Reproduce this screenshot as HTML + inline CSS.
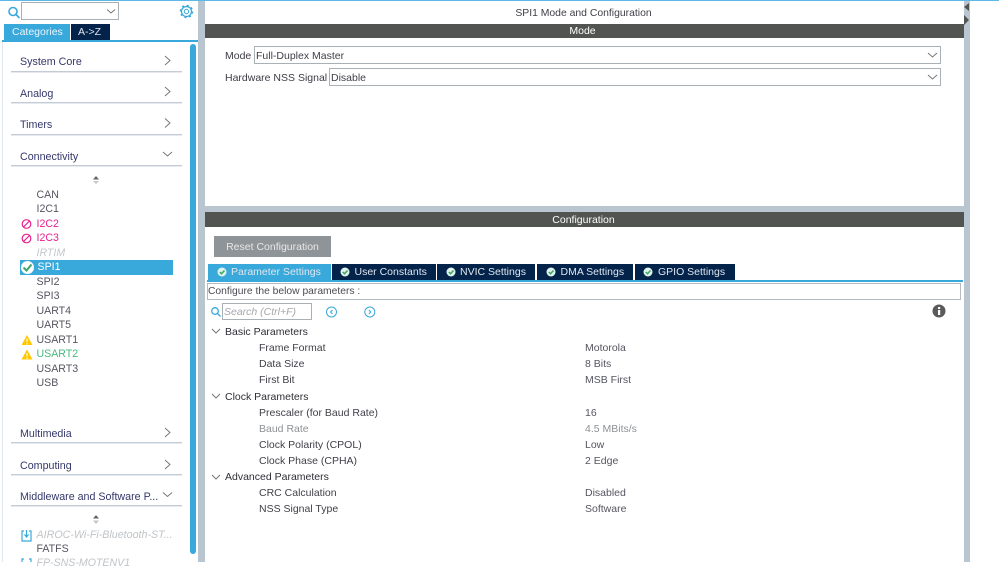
<!DOCTYPE html>
<html><head><meta charset="utf-8"><style>
html,body{margin:0;padding:0;background:#fff}
body{width:999px;height:562px;overflow:hidden;position:relative;font-family:"Liberation Sans",sans-serif;font-size:11px;color:#3c3c46}
.a{position:absolute;white-space:nowrap}
.cat{position:absolute;left:20px;font-size:10.7px;color:#35386a;line-height:14px;margin-top:1px;white-space:nowrap}
.ln{position:absolute;left:11px;width:171px;height:1px;background:#c3ccd4;box-shadow:0 1px 0 #e6eaee}
.it{position:absolute;left:36.5px;font-size:10.6px;line-height:14px;color:#555560;white-space:nowrap}
.t{position:absolute;top:264px;height:16px;background:#03234b;color:#dfe6ee;font-size:10.5px;line-height:16px;box-sizing:border-box}
.t svg{position:absolute;top:3px}
.t span{position:absolute;top:0;white-space:nowrap}
.hd{position:absolute;left:205px;width:759px;height:14px;background:#525452;color:#fff;text-align:center;font-size:10.5px;line-height:14px}
.p{position:absolute;font-size:10.5px;line-height:14px;color:#3f3f48;white-space:nowrap;margin-top:1px}
.v{position:absolute;left:585px;font-size:10.5px;line-height:14px;color:#555560;white-space:nowrap;margin-top:1px}
.sel{position:absolute;box-sizing:border-box;height:18px;background:#fff;border:1px solid #a9b0b6;font-size:10.5px;line-height:18px;padding-left:1px;color:#3f3f48}
</style></head><body>
<div class="a" style="left:0;top:0;width:999px;height:1px;background:#5cb8e6"></div>
<div class="a" style="left:198px;top:1px;width:7px;height:561px;background:#b9c6cf"></div>
<div class="a" style="left:964px;top:1px;width:6px;height:561px;background:#b9c6cf"></div>
<div class="a" style="left:2px;top:42px;width:1px;height:520px;background:#e3e8ec"></div>
<svg class="a" style="left:964px;top:1px" width="6" height="26"><path d="M5 2V10L0 6Z" fill="#525452"/><path d="M0 14V24L5 19Z" fill="#525452"/></svg>

<svg class="a" style="left:6px;top:5px" width="16" height="16" fill="none" stroke="#39a9dc" stroke-width="1.6"><circle cx="7" cy="6.5" r="4"/><path d="M10 9.5L13.5 13"/></svg>
<div class="a" style="left:21px;top:2px;width:98px;height:18px;box-sizing:border-box;border:1px solid #a9b0b6;background:#fff"></div>
<svg class="a" style="left:106px;top:8px" width="10" height="7" fill="none" stroke="#777" stroke-width="1"><path d="M1 1.5L5 5L9 1.5"/></svg>
<svg class="a" style="left:179px;top:4px" width="15" height="15" viewBox="0 0 15 15" fill="none" stroke="#39a9dc"><circle cx="7.5" cy="7.5" r="2.2"/><circle cx="7.5" cy="7.5" r="5" stroke-width="1.2"/><circle cx="7.5" cy="7.5" r="6" stroke-width="1.6" stroke-dasharray="2 2.71"/></svg>

<div class="a" style="left:4px;top:24px;width:66px;height:16px;background:#39a9dc;color:#e8f5fb;font-size:10.5px;line-height:16px;text-indent:8px">Categories</div>
<div class="a" style="left:71px;top:24px;width:39px;height:16px;background:#03234b;color:#dfe6ee;font-size:10.5px;line-height:16px;text-indent:7px">A-&gt;Z</div>
<div class="a" style="left:2px;top:40px;width:196px;height:2px;background:#39a9dc"></div>
<div class="a" style="left:190px;top:44px;width:6px;height:510px;background:#39a9dc;border-radius:3px"></div>

<div class="cat" style="top:54px">System Core</div><div class="ln" style="top:71px"></div>
<div class="cat" style="top:86px">Analog</div><div class="ln" style="top:102px"></div>
<div class="cat" style="top:117px">Timers</div><div class="ln" style="top:134px"></div>
<div class="cat" style="top:149px">Connectivity</div><div class="ln" style="top:165px"></div>
<div class="cat" style="top:426px">Multimedia</div><div class="ln" style="top:442px"></div>
<div class="cat" style="top:458px">Computing</div><div class="ln" style="top:474px"></div>
<div class="cat" style="top:489px">Middleware and Software P...</div><div class="ln" style="top:505px"></div>

<svg class="a" style="left:160px;top:50px" width="16" height="130" fill="none" stroke="#777" stroke-width="1">
<path d="M5 6L10 10.500L5 15"/><path d="M5 37L10 41.500L5 46"/><path d="M5 68.500L10 73L5 77.500"/><path d="M3 102L7.500 106L12 102"/></svg>
<svg class="a" style="left:160px;top:420px" width="16" height="90" fill="none" stroke="#777" stroke-width="1">
<path d="M5 8L10 12.500L5 17"/><path d="M5 40L10 44.500L5 49"/><path d="M3 72.500L7.500 76.500L12 72.500"/></svg>

<svg class="a" style="left:92px;top:176px" width="8" height="9"><path d="M4 0L7 3.500H1Z" fill="#666"/><path d="M4 8L7 5H1Z" fill="#c6c6c6"/></svg>
<svg class="a" style="left:92px;top:515px" width="8" height="10"><path d="M4 0L7 3.500H1Z" fill="#666"/><path d="M4 9L7 5.500H1Z" fill="#c6c6c6"/></svg>

<div class="it" style="top:188px">CAN</div>
<div class="it" style="top:202px">I2C1</div>
<div class="it" style="top:217px;color:#e6208f">I2C2</div>
<div class="it" style="top:231px;color:#e6208f">I2C3</div>
<div class="it" style="top:246px;color:#c4c8cc;font-style:italic">IRTIM</div>
<div class="a" style="left:20px;top:260px;width:153px;height:15px;background:#39a9dc"></div>
<div class="it" style="left:37.500px;top:260px;color:#fff">SPI1</div>
<div class="it" style="top:275px">SPI2</div>
<div class="it" style="top:289px">SPI3</div>
<div class="it" style="top:304px">UART4</div>
<div class="it" style="top:318px">UART5</div>
<div class="it" style="top:333px">USART1</div>
<div class="it" style="top:347px;color:#46b97c">USART2</div>
<div class="it" style="top:362px">USART3</div>
<div class="it" style="top:376px">USB</div>
<div class="it" style="top:528px;color:#c0c4c8;font-style:italic;font-size:10.7px">AIROC-Wi-Fi-Bluetooth-ST...</div>
<div class="it" style="top:542px">FATFS</div>
<div class="it" style="top:556px;color:#c0c4c8;font-style:italic">FP-SNS-MOTENV1</div>

<svg class="a" style="left:21px;top:218px" width="12" height="26" fill="none" stroke="#e6208f" stroke-width="1.200"><circle cx="5.500" cy="6" r="4.300"/><path d="M2.500 9L8.500 3"/><circle cx="5.500" cy="20.500" r="4.300"/><path d="M2.500 23.500L8.500 17.500"/></svg>
<svg class="a" style="left:20px;top:260px" width="15" height="15"><circle cx="7.500" cy="7.500" r="6.500" fill="#fff"/><path d="M3.500 7.500L6.500 10.500L11.500 4.500" fill="none" stroke="#3fa46a" stroke-width="2"/></svg>
<svg class="a" style="left:21px;top:335px" width="13" height="26"><path d="M6 0L11.500 10H.5Z" fill="#ffc800"/><path d="M6 3.500V7M6 8V9.500" stroke="#fff" stroke-width="1"/><path d="M6 14.500L11.500 24.500H.5Z" fill="#ffc800"/><path d="M6 18V21.500M6 22.500V24" stroke="#fff" stroke-width="1"/></svg>
<svg class="a" style="left:21px;top:529px" width="12" height="33" fill="none" stroke="#39a9dc" stroke-width="1.200"><path d="M3 2H1V12H10V2H8"/><path d="M5.500 1V7"/><path d="M3.500 5.500L5.500 8L7.500 5.500"/><path d="M3 30H1V36H10V30H8"/></svg>

<div class="a" style="left:205px;top:7px;width:759px;text-align:center;font-size:10.4px;line-height:14px;color:#3f3f48;text-indent:-2px">SPI1 Mode and Configuration</div>
<div class="hd" style="top:24px;text-indent:-4px">Mode</div>
<div class="a" style="left:225px;top:49px;font-size:10.500px;line-height:14px">Mode</div>
<div class="sel" style="left:254px;top:46px;width:687px">Full-Duplex Master</div>
<div class="a" style="left:225px;top:71px;font-size:10.500px;line-height:14px">Hardware NSS Signal</div>
<div class="sel" style="left:329px;top:68px;width:612px">Disable</div>
<svg class="a" style="left:927px;top:51px" width="11" height="30" fill="none" stroke="#777"><path d="M1 2L5.500 6L10 2"/><path d="M1 24L5.500 28L10 24"/></svg>

<div class="a" style="left:205px;top:206px;width:759px;height:6px;background:#b9c6cf"></div>
<div class="hd" style="top:212px;height:15px;line-height:16px;text-indent:-2px">Configuration</div>

<div class="a" style="left:214px;top:236px;width:117px;height:21px;background:#8f9498;color:#e8e8e8;font-size:10.500px;line-height:23px;text-align:center">Reset Configuration</div>

<div class="t" style="left:208px;width:123px;background:#39a9dc"><svg style="left:9px" width="10" height="10"><use href="#ck"/></svg><span style="left:23px">Parameter Settings</span></div>
<div class="t" style="left:332px;width:104px"><svg style="left:8px" width="10" height="10"><use href="#ck"/></svg><span style="left:22.500px">User Constants</span></div>
<div class="t" style="left:437px;width:98px"><svg style="left:9px" width="10" height="10"><use href="#ck"/></svg><span style="left:23px">NVIC Settings</span></div>
<div class="t" style="left:537px;width:96px"><svg style="left:9px" width="10" height="10"><use href="#ck"/></svg><span style="left:23.500px">DMA Settings</span></div>
<div class="t" style="left:635px;width:100px"><svg style="left:8px" width="10" height="10"><use href="#ck"/></svg><span style="left:23px">GPIO Settings</span></div>
<svg width="0" height="0" style="position:absolute"><defs><g id="ck"><circle cx="5" cy="5" r="4.500" fill="#dff3ea"/><path d="M2.800 5L4.500 6.800L7.500 3.500" fill="none" stroke="#3fa46a" stroke-width="1.500"/></g></defs></svg>
<div class="a" style="left:207px;top:280px;width:756px;height:2px;background:#39a9dc"></div>
<div class="a" style="left:207px;top:283px;width:754px;height:17px;box-sizing:border-box;border:1px solid #b4bbc0;font-size:10.3px;line-height:16px;color:#4a4a52">Configure the below parameters :</div>

<svg class="a" style="left:210px;top:306px" width="12" height="12" fill="none" stroke="#39a9dc" stroke-width="1.300"><circle cx="5" cy="5" r="3.300"/><path d="M7.500 7.500L10.500 10.500"/></svg>
<div class="a" style="left:222px;top:303px;width:90px;height:17px;box-sizing:border-box;border:1px solid #a9b0b6;font-size:10.500px;line-height:17px;color:#a4a8ac;font-style:italic;padding-left:1px">Search (Ctrl+F)</div>
<svg class="a" style="left:325px;top:305px" width="52" height="14" fill="none" stroke="#39a9dc"><circle cx="6.500" cy="7" r="5"/><path d="M7.500 5L5.500 7L7.500 9"/><circle cx="44.800" cy="7" r="5"/><path d="M43.800 5L45.800 7L43.800 9"/></svg>
<svg class="a" style="left:932px;top:304px" width="14" height="14"><circle cx="7" cy="7" r="6.500" fill="#5a5a5a"/><rect x="6" y="6" width="2.200" height="5" fill="#fff"/><rect x="6" y="3" width="2.200" height="2" fill="#fff"/></svg>

<svg class="a" style="left:211px;top:325px" width="10" height="160" fill="none" stroke="#777"><path d="M1 4L5 8L9 4"/><path d="M1 69L5 73L9 69"/><path d="M1 150L5 154L9 150"/></svg>
<div class="p" style="left:225px;top:324px;color:#2e2e36">Basic Parameters</div>
<div class="p" style="left:259px;top:340px">Frame Format</div><div class="v" style="top:340px">Motorola</div>
<div class="p" style="left:259px;top:356px">Data Size</div><div class="v" style="top:356px">8 Bits</div>
<div class="p" style="left:259px;top:372px">First Bit</div><div class="v" style="top:372px">MSB First</div>
<div class="p" style="left:225px;top:389px;color:#2e2e36">Clock Parameters</div>
<div class="p" style="left:259px;top:405px">Prescaler (for Baud Rate)</div><div class="v" style="top:405px">16</div>
<div class="p" style="left:259px;top:421px;color:#8e9296">Baud Rate</div><div class="v" style="top:421px;color:#8e9296">4.5 MBits/s</div>
<div class="p" style="left:259px;top:437px">Clock Polarity (CPOL)</div><div class="v" style="top:437px">Low</div>
<div class="p" style="left:259px;top:453px">Clock Phase (CPHA)</div><div class="v" style="top:453px">2 Edge</div>
<div class="p" style="left:225px;top:469px;color:#2e2e36">Advanced Parameters</div>
<div class="p" style="left:259px;top:485px">CRC Calculation</div><div class="v" style="top:485px">Disabled</div>
<div class="p" style="left:259px;top:501px">NSS Signal Type</div><div class="v" style="top:501px">Software</div>
</body></html>
